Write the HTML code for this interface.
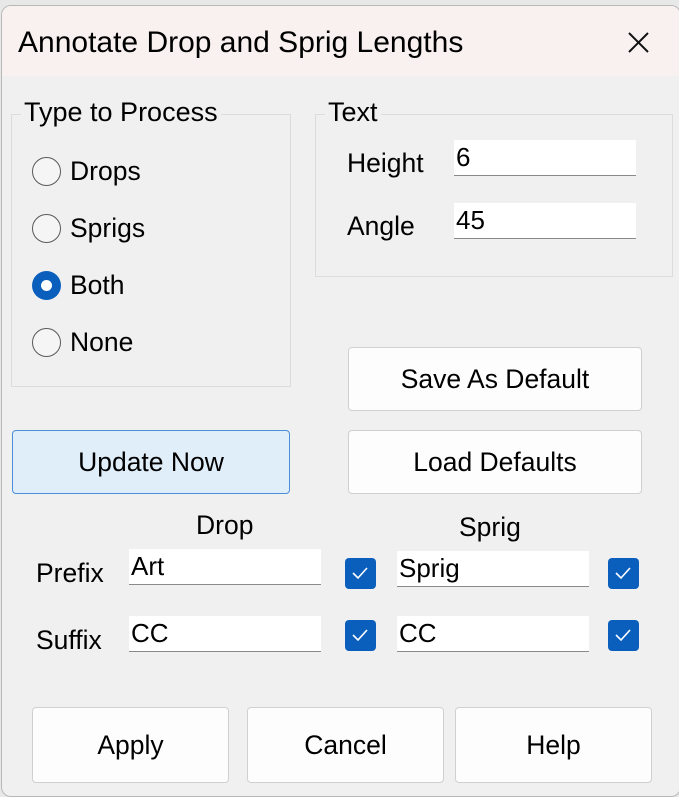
<!DOCTYPE html>
<html><head><style>
body{margin:0;width:679px;height:791px;background:#e8e8e8;position:relative;overflow:hidden;font-family:"Liberation Sans",sans-serif;color:#000}
.win{position:absolute;left:1px;top:5px;width:678px;height:790px;background:#f0f0f0;border:1px solid #b8b8b8;border-radius:10px;overflow:hidden}
.title{position:absolute;left:0;top:0;right:0;height:70px;background:#f8f1ef}
.a{position:absolute;white-space:nowrap}
.t{font-size:26.5px}
.grp{position:absolute;border:1px solid #dcdcdc}
.lg{position:absolute;background:#f0f0f0;padding:0 3px;font-size:27px;top:-18px}
.rb{position:absolute;width:29px;height:29px;border:1.5px solid #5a5a5a;border-radius:50%;box-sizing:border-box;background:#f5f5f5}
.rb.on{border:none;background:#0a5fbd}
.rb.on:after{content:"";position:absolute;left:9px;top:9px;width:11px;height:11px;border-radius:50%;background:#fff}
.in{position:absolute;background:#fff;border-bottom:1.5px solid #8a8a8a;box-sizing:border-box;font-size:26px;padding-left:2px;line-height:34px}
.btn{position:absolute;background:#fdfdfd;border:1px solid #d0d0d0;border-radius:4px;box-sizing:border-box;display:flex;align-items:center;justify-content:center;font-size:26.5px}
.cb{position:absolute;width:31px;height:31px;border-radius:4px;background:#0a5fbd}
</style></head><body>
<div class="win">
<div class="title"></div>
<div class="a" style="left:16px;top:20px;font-size:30px">Annotate Drop and Sprig Lengths</div>
<svg class="a" style="left:625px;top:25px" width="24" height="24"><path d="M2 2L21 21M21 2L2 21" stroke="#111" stroke-width="2"/></svg>

<div class="grp" style="left:9px;top:108px;width:278px;height:271px"><div class="lg" style="left:9px">Type to Process</div></div>
<div class="rb" style="left:30px;top:151px"></div><div class="a t" style="left:68px;top:150px">Drops</div>
<div class="rb" style="left:30px;top:208px"></div><div class="a t" style="left:68px;top:207px">Sprigs</div>
<div class="rb on" style="left:30px;top:265px"></div><div class="a t" style="left:68px;top:264px">Both</div>
<div class="rb" style="left:30px;top:322px"></div><div class="a t" style="left:68px;top:321px">None</div>

<div class="grp" style="left:313px;top:108px;width:356px;height:161px"><div class="lg" style="left:9px">Text</div></div>
<div class="a t" style="left:345px;top:142px">Height</div>
<div class="in" style="left:452px;top:134px;width:182px;height:36px">6</div>
<div class="a t" style="left:345px;top:205px">Angle</div>
<div class="in" style="left:452px;top:197px;width:182px;height:36px">45</div>

<div class="btn" style="left:346px;top:341px;width:294px;height:64px">Save As Default</div>
<div class="btn" style="left:346px;top:424px;width:294px;height:64px">Load Defaults</div>
<div class="btn" style="left:10px;top:424px;width:278px;height:64px;background:#e0eef9;border-color:#4a90d9">Update Now</div>

<div class="a t" style="left:194px;top:504px">Drop</div>
<div class="a t" style="left:457px;top:506px">Sprig</div>
<div class="a t" style="left:34px;top:552px">Prefix</div>
<div class="in" style="left:127px;top:543px;width:192px;height:36px">Art</div>
<div class="cb" style="left:343px;top:552px"></div>
<div class="in" style="left:395px;top:545px;width:192px;height:36px">Sprig</div>
<div class="cb" style="left:606px;top:552px"></div>
<div class="a t" style="left:34px;top:619px">Suffix</div>
<div class="in" style="left:127px;top:610px;width:192px;height:36px">CC</div>
<div class="cb" style="left:343px;top:614px"></div>
<div class="in" style="left:395px;top:610px;width:192px;height:36px">CC</div>
<div class="cb" style="left:606px;top:614px"></div>

<div class="btn" style="left:30px;top:701px;width:197px;height:76px">Apply</div>
<div class="btn" style="left:245px;top:701px;width:197px;height:76px">Cancel</div>
<div class="btn" style="left:453px;top:701px;width:197px;height:76px">Help</div>
</div>
<svg style="position:absolute;left:0;top:0" width="679" height="791">
<g fill="none" stroke="#fff" stroke-width="1.6">
<path d="M353 573l5 5 9-10"/><path d="M616 573l5 5 9-10"/><path d="M353 635l5 5 9-10"/><path d="M616 635l5 5 9-10"/>
</g></svg>
</body></html>
